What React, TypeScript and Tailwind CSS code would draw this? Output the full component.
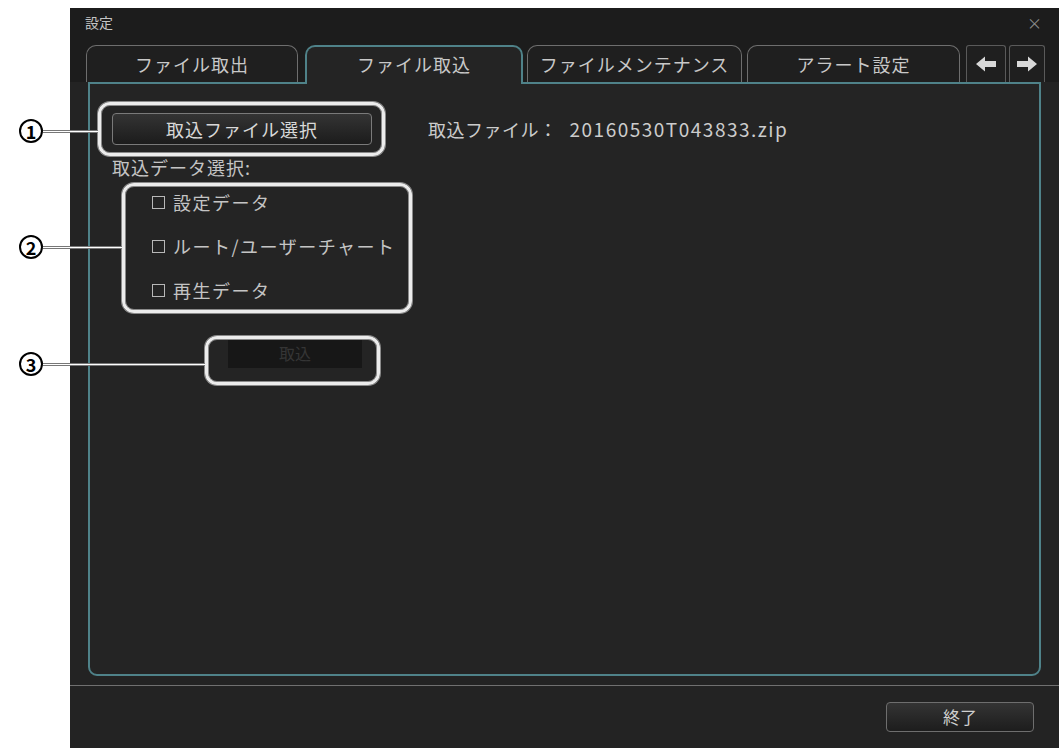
import React from "react";

const font = { fontFamily: '"Noto Sans CJK JP", "Noto Sans", sans-serif' };

function ArrowIcon({ dir }: { dir: "left" | "right" }) {
  return (
    <svg width="22" height="16" viewBox="0 0 22 16">
      <path
        d={
          dir === "left"
            ? "M1 8 L10 0.5 L10 5 L21 5 L21 11 L10 11 L10 15.5 Z"
            : "M21 8 L12 0.5 L12 5 L1 5 L1 11 L12 11 L12 15.5 Z"
        }
        fill="#d8d8d8"
      />
    </svg>
  );
}

function Callout({ n, top, lineTo }: { n: number; top: number; lineTo: number }) {
  return (
    <div className="absolute left-[19px] flex items-center" style={{ top }}>
      <div className="flex h-[24px] w-[24px] items-center justify-center rounded-full border-[2.5px] border-black bg-white text-[18px] font-bold leading-none text-black">
        {n}
      </div>
      <div
        className="h-[3px] border-y border-[#777] bg-white"
        style={{ width: lineTo - 43 }}
      />
    </div>
  );
}

const highlight =
  "absolute rounded-[12px] border-[3px] border-[#ececec] shadow-[0_0_0_1px_#8a8a8a,inset_0_0_0_1px_#8a8a8a]";

export default function App() {
  const tabBase =
    "flex items-center justify-center rounded-t-[10px] text-[18px] tracking-[1px] text-[#c8c8c8]";

  return (
    <div className="relative h-[748px] w-[1059px] overflow-hidden bg-white" style={font}>
      <div className="ml-[70px] mt-[8px] flex h-[740px] w-[989px] flex-col bg-[#232323]">
        {/* title */}
        <div className="flex h-[37px] items-start justify-between bg-[#1c1c1c] px-[15px] pt-[4px]">
          <span className="text-[14px] text-[#c4c4c4]">設定</span>
          <span className="mr-[2px] text-[15px] text-[#8a8a8a]">×</span>
        </div>

        {/* tabs */}
        <div className="flex h-[37px] items-end bg-[#1c1c1c] pl-[16px]">
          <div className={`${tabBase} h-[37px] w-[212px] border-x-[1.5px] border-t-[1.5px] border-[#6e6e6e] bg-[#1f1f1f]`}>
            ファイル取出
          </div>
          <div className={`${tabBase} relative z-10 -mb-[2px] ml-[7px] h-[39px] w-[218px] border-x-2 border-t-2 border-[#4f8289] bg-[#242424] pb-[2px]`}>
            ファイル取込
          </div>
          <div className={`${tabBase} ml-[4px] h-[37px] w-[215px] border-x-[1.5px] border-t-[1.5px] border-[#6e6e6e] bg-[#1f1f1f] tracking-[1.5px]`}>
            ファイルメンテナンス
          </div>
          <div className={`${tabBase} ml-[5px] h-[37px] w-[213px] border-x-[1.5px] border-t-[1.5px] border-[#6e6e6e] bg-[#1f1f1f]`}>
            アラート設定
          </div>
          <div className="ml-[6px] flex h-[37px] w-[40px] items-center justify-center rounded-t-[3px] border-x-[1.5px] border-t-[1.5px] border-[#5a5a5a] bg-[#1f1f1f]">
            <ArrowIcon dir="left" />
          </div>
          <div className="ml-[3px] flex h-[37px] w-[36px] items-center justify-center rounded-t-[3px] border-x-[1.5px] border-t-[1.5px] border-[#5a5a5a] bg-[#1f1f1f]">
            <ArrowIcon dir="right" />
          </div>
        </div>

        {/* panel */}
        <div className="ml-[18px] h-[594px] w-[953px] rounded-b-[9px] border-2 border-[#4f8289] bg-[#242424] pl-[22px] pt-[29px] text-[#c8c8c8]">
          <div className="flex items-center">
            <button className="h-[32px] w-[260px] rounded-[4px] border border-[#7a7a7a] bg-gradient-to-b from-[#343434] to-[#1c1c1c] text-[18px] tracking-[1px] text-[#d8d8d8]">
              取込ファイル選択
            </button>
            <span className="ml-[56px] text-[18px] tracking-[0.5px] text-[#cccccc]">
              取込ファイル：
              <span className="ml-[12px] text-[19px] tracking-[1.5px]">20160530T043833.zip</span>
            </span>
          </div>
          <div className="mt-[10px] text-[18px] leading-[24px] tracking-[1px] text-[#c4c4c4]">取込データ選択:</div>
          <div className="ml-[40px] mt-[11px] flex flex-col gap-[20px] text-[18px] leading-[24px] tracking-[1.5px] text-[#c4c4c4]">
            {["設定データ", "ルート/ユーザーチャート", "再生データ"].map((label) => (
              <div key={label} className="flex items-center">
                <span className="h-[13px] w-[13px] border border-[#b8b8b8]" />
                <span className="ml-[8px]">{label}</span>
              </div>
            ))}
          </div>
          <button className="ml-[116px] mt-[36px] h-[30px] w-[134px] bg-[#171717] text-[16px] text-[#353535]">
            取込
          </button>
        </div>

        <div className="mt-[9px] h-[1px] bg-[#707070]" />

        {/* footer */}
        <div className="flex flex-1 items-start justify-end pr-[25px] pt-[16px]">
          <button className="h-[30px] w-[148px] rounded-[4px] border border-[#6e6e6e] bg-gradient-to-b from-[#343434] to-[#1d1d1d] text-[17px] text-[#d0d0d0]">
            終了
          </button>
        </div>
      </div>

      {/* annotations */}
      <div className={`${highlight} left-[98px] top-[102px] h-[54px] w-[287px]`} />
      <div className={`${highlight} left-[122px] top-[183px] h-[130px] w-[290px]`} />
      <div className={`${highlight} left-[205px] top-[336px] h-[49px] w-[175px]`} />
      <Callout n={1} top={119} lineTo={98} />
      <Callout n={2} top={235} lineTo={122} />
      <Callout n={3} top={352} lineTo={205} />
    </div>
  );
}
